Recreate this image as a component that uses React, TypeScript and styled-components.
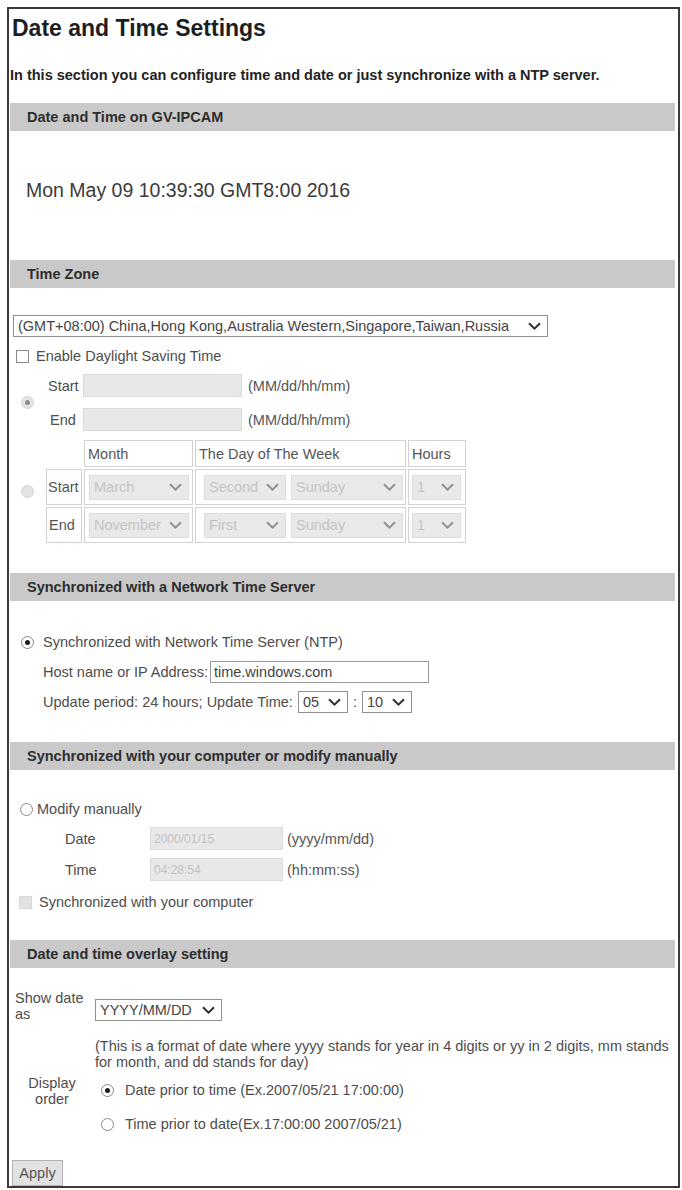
import React from "react";
import styled, { createGlobalStyle } from "styled-components";

const Global = createGlobalStyle`
  html, body { margin: 0; padding: 0; background: #fff; }
  body {
    font-family: "Liberation Sans", Arial, sans-serif;
    font-size: 14.5px;
    line-height: 18px;
    color: #4d4d4d;
  }
  #root { padding: 7px; }
`;

const Page = styled.div`
  box-sizing: border-box;
  width: 673px;
  min-height: 1181px;
  border: 2px solid #3a3a3a;
  display: flex;
  flex-direction: column;
`;

const Title = styled.h1`
  margin: 5px 0 0 3px;
  font-size: 23px;
  line-height: 28px;
  font-weight: bold;
  color: #1e1e1e;
`;

const Intro = styled.p`
  margin: 24px 0 19px 1px;
  font-size: 14.5px;
  line-height: 18px;
  font-weight: bold;
  color: #232323;
`;

const Section = styled.section`
  display: flex;
  flex-direction: column;
`;

const Bar = styled.h2`
  box-sizing: border-box;
  margin: 0 3px 0 1px;
  height: 28px;
  padding-left: 17px;
  display: flex;
  align-items: center;
  background: #c9c9c9;
  font-size: 14.5px;
  font-weight: bold;
  color: #2e2e2e;
`;

const Body = styled.div<{ $pt: number; $pb: number; $pl: number }>`
  display: flex;
  flex-direction: column;
  align-items: flex-start;
  padding: ${(p) => p.$pt}px 0 ${(p) => p.$pb}px ${(p) => p.$pl}px;
`;

const DateNow = styled.div`
  font-size: 19.5px;
  line-height: 24px;
  color: #3b3b3b;
`;

const Row = styled.div<{ $mt?: number; $ml?: number; $gap?: number; $h?: number }>`
  display: flex;
  align-items: center;
  margin-top: ${(p) => p.$mt ?? 0}px;
  margin-left: ${(p) => p.$ml ?? 0}px;
  gap: ${(p) => p.$gap ?? 0}px;
  min-height: ${(p) => p.$h ?? 18}px;
  white-space: nowrap;
`;

const Radio = styled.span<{ $checked?: boolean; $disabled?: boolean }>`
  box-sizing: border-box;
  flex: none;
  width: 13px;
  height: 13px;
  border-radius: 50%;
  border: 1px solid ${(p) => (p.$disabled ? "#d4d4d4" : "#8a8a8a")};
  background: ${(p) => (p.$disabled ? "#e3e3e3" : "#fff")};
  display: inline-flex;
  align-items: center;
  justify-content: center;
  &::after {
    content: "";
    display: ${(p) => (p.$checked ? "block" : "none")};
    width: 5px;
    height: 5px;
    border-radius: 50%;
    background: ${(p) => (p.$disabled ? "#8e8e8e" : "#1f1f1f")};
  }
`;

const Check = styled.span<{ $disabled?: boolean }>`
  box-sizing: border-box;
  flex: none;
  width: 13px;
  height: 13px;
  border: 1px solid ${(p) => (p.$disabled ? "#dadada" : "#8a8a8a")};
  background: ${(p) => (p.$disabled ? "#e2e2e2" : "#fff")};
`;

const SelectBox = styled.div<{ $w: number; $h?: number; $disabled?: boolean }>`
  box-sizing: border-box;
  flex: none;
  width: ${(p) => p.$w}px;
  height: ${(p) => p.$h ?? 22}px;
  display: flex;
  align-items: center;
  justify-content: space-between;
  gap: 4px;
  padding: 0 6px 0 4px;
  border: 1px solid ${(p) => (p.$disabled ? "#dcdcdc" : "#8f8f8f")};
  background: ${(p) => (p.$disabled ? "#e9e9e9" : "#fff")};
  color: ${(p) => (p.$disabled ? "#c4c4c4" : "#444")};
  font-size: 14.5px;
  white-space: nowrap;
  overflow: hidden;
`;

const SelectText = styled.span`
  overflow: hidden;
  text-overflow: clip;
`;

const TextField = styled.input<{ $w: number; $h?: number }>`
  box-sizing: border-box;
  flex: none;
  width: ${(p) => p.$w}px;
  height: ${(p) => p.$h ?? 22}px;
  margin: 0;
  padding: 0 3px;
  border: 1px solid #9a9a9a;
  background: #fff;
  font-family: "Liberation Sans", Arial, sans-serif;
  font-size: 14.5px;
  color: #444;
  outline: none;
  &:disabled {
    border-color: #dadada;
    background: #e8e8e8;
    color: #c2c2c2;
    font-size: 12px;
  }
`;

const Label = styled.span<{ $w?: number; $pl?: number }>`
  flex: none;
  box-sizing: border-box;
  width: ${(p) => (p.$w ? `${p.$w}px` : "auto")};
  padding-left: ${(p) => p.$pl ?? 0}px;
`;

const Hint = styled.span<{ $ml: number }>`
  margin-left: ${(p) => p.$ml}px;
  color: #555;
`;

const Mode = styled.div<{ $mt: number }>`
  display: flex;
  align-items: center;
  margin-top: ${(p) => p.$mt}px;
`;

const RadioSlot = styled.div`
  box-sizing: border-box;
  width: 33px;
  padding-left: 8px;
  display: flex;
`;

const Stack = styled.div<{ $gap: number }>`
  display: flex;
  flex-direction: column;
  gap: ${(p) => p.$gap}px;
`;

const DstTable = styled.div`
  display: grid;
  grid-template-columns: 36px 109px 211px 58px;
  grid-template-rows: 27px 36px 36px;
  gap: 2px;
`;

const Cell = styled.div<{ $blank?: boolean; $pl?: number }>`
  box-sizing: border-box;
  border: 1px solid ${(p) => (p.$blank ? "transparent" : "#d2d2d2")};
  display: flex;
  align-items: center;
  gap: 5px;
  padding-left: ${(p) => p.$pl ?? 3}px;
  color: #555;
  white-space: nowrap;
  overflow: hidden;
`;

const OverlayGrid = styled.div`
  display: grid;
  grid-template-columns: 80px 1fr;
  align-items: start;
`;

const SideLabel = styled.div<{ $center?: boolean; $mt?: number }>`
  margin-top: ${(p) => p.$mt ?? 0}px;
  line-height: 16px;
  text-align: ${(p) => (p.$center ? "center" : "left")};
  padding-right: ${(p) => (p.$center ? 6 : 0)}px;
`;

const Desc = styled.p`
  margin: 16px 0 0 0;
  line-height: 16px;
  padding-right: 4px;
`;

const RadioList = styled.div`
  margin-top: 11px;
  padding-left: 6px;
  display: flex;
  flex-direction: column;
  gap: 16px;
`;

const Slot = styled.div<{ $mt?: number }>`
  margin-top: ${(p) => p.$mt ?? 0}px;
`;

const ApplyButton = styled.button`
  box-sizing: border-box;
  margin: 27px 0 0 3px;
  align-self: flex-start;
  width: 51px;
  height: 26px;
  padding: 0;
  border: 1px solid #b3b3b3;
  background: #e2e2e2;
  font-family: "Liberation Sans", Arial, sans-serif;
  font-size: 14.5px;
  color: #555;
`;

const Chevron: React.FC<{ color: string }> = ({ color }) => (
  <svg width="13" height="8" viewBox="0 0 13 8" style={{ flex: "none" }}>
    <path d="M1 1.2 L6.5 6.6 L12 1.2" fill="none" stroke={color} strokeWidth="2" />
  </svg>
);

const Select: React.FC<{ value: string; w: number; h?: number; disabled?: boolean }> = ({
  value,
  w,
  h,
  disabled,
}) => (
  <SelectBox $w={w} $h={h} $disabled={disabled}>
    <SelectText>{value}</SelectText>
    <Chevron color={disabled ? "#8f8f8f" : "#2f2f2f"} />
  </SelectBox>
);

export default function App() {
  return (
    <>
      <Global />
      <Page>
        <Title>Date and Time Settings</Title>
        <Intro>In this section you can configure time and date or just synchronize with a NTP server.</Intro>

        <Section>
          <Bar>Date and Time on GV-IPCAM</Bar>
          <Body $pt={47} $pb={58} $pl={17}>
            <DateNow>Mon May 09 10:39:30 GMT8:00 2016</DateNow>
          </Body>
        </Section>

        <Section>
          <Bar>Time Zone</Bar>
          <Body $pt={27} $pb={30} $pl={4}>
            <Select w={535} value="(GMT+08:00) China,Hong Kong,Australia Western,Singapore,Taiwan,Russia" />
            <Row $mt={10} $ml={3} $gap={7}>
              <Check />
              <span>Enable Daylight Saving Time</span>
            </Row>
            <Mode $mt={9}>
              <RadioSlot>
                <Radio $checked $disabled />
              </RadioSlot>
              <Stack $gap={11}>
                <Row $h={23}>
                  <Label $w={37} $pl={2}>Start</Label>
                  <TextField $w={159} $h={23} disabled />
                  <Hint $ml={6}>(MM/dd/hh/mm)</Hint>
                </Row>
                <Row $h={23}>
                  <Label $w={37} $pl={4}>End</Label>
                  <TextField $w={159} $h={23} disabled />
                  <Hint $ml={6}>(MM/dd/hh/mm)</Hint>
                </Row>
              </Stack>
            </Mode>
            <Mode $mt={9}>
              <RadioSlot>
                <Radio $disabled />
              </RadioSlot>
              <DstTable>
                <Cell $blank />
                <Cell>Month</Cell>
                <Cell>The Day of The Week</Cell>
                <Cell>Hours</Cell>

                <Cell $pl={1}>Start</Cell>
                <Cell $pl={4}>
                  <Select w={100} h={25} disabled value="March" />
                </Cell>
                <Cell $pl={8}>
                  <Select w={82} h={25} disabled value="Second" />
                  <Select w={112} h={25} disabled value="Sunday" />
                </Cell>
                <Cell $pl={3}>
                  <Select w={49} h={25} disabled value="1" />
                </Cell>

                <Cell $pl={2}>End</Cell>
                <Cell $pl={4}>
                  <Select w={100} h={25} disabled value="November" />
                </Cell>
                <Cell $pl={8}>
                  <Select w={82} h={25} disabled value="First" />
                  <Select w={112} h={25} disabled value="Sunday" />
                </Cell>
                <Cell $pl={3}>
                  <Select w={49} h={25} disabled value="1" />
                </Cell>
              </DstTable>
            </Mode>
          </Body>
        </Section>

        <Section>
          <Bar>Synchronized with a Network Time Server</Bar>
          <Body $pt={32} $pb={29} $pl={12}>
            <Row $gap={9}>
              <Radio $checked />
              <span>Synchronized with Network Time Server (NTP)</span>
            </Row>
            <Row $mt={10} $ml={22} $gap={2} $h={22}>
              <span>Host name or IP Address:</span>
              <TextField $w={219} defaultValue="time.windows.com" />
            </Row>
            <Row $mt={8} $ml={22} $gap={5} $h={22}>
              <span>Update period: 24 hours; Update Time:</span>
              <Select w={50} value="05" />
              <span>:</span>
              <Select w={50} value="10" />
            </Row>
          </Body>
        </Section>

        <Section>
          <Bar>Synchronized with your computer or modify manually</Bar>
          <Body $pt={30} $pb={29} $pl={11}>
            <Row $gap={4}>
              <Radio />
              <span>Modify manually</span>
            </Row>
            <Row $mt={9} $ml={45} $h={23}>
              <Label $w={85}>Date</Label>
              <TextField $w={133} $h={23} disabled defaultValue="2000/01/15" />
              <Hint $ml={4}>(yyyy/mm/dd)</Hint>
            </Row>
            <Row $mt={8} $ml={45} $h={23}>
              <Label $w={85}>Time</Label>
              <TextField $w={133} $h={23} disabled defaultValue="04:28:54" />
              <Hint $ml={4}>(hh:mm:ss)</Hint>
            </Row>
            <Row $mt={12} $ml={-1} $gap={7}>
              <Check $disabled />
              <span>Synchronized with your computer</span>
            </Row>
          </Body>
        </Section>

        <Section>
          <Bar>Date and time overlay setting</Bar>
          <Body $pt={22} $pb={0} $pl={6}>
            <OverlayGrid>
              <SideLabel>Show date as</SideLabel>
              <Slot $mt={9}>
                <Select w={127} value="YYYY/MM/DD" />
              </Slot>
              <div />
              <Desc>
                (This is a format of date where yyyy stands for year in 4 digits or yy in 2 digits, mm stands for
                month, and dd stands for day)
              </Desc>
              <SideLabel $center $mt={5}>
                Display order
              </SideLabel>
              <RadioList>
                <Row $gap={11}>
                  <Radio $checked />
                  <span>Date prior to time (Ex.2007/05/21 17:00:00)</span>
                </Row>
                <Row $gap={11}>
                  <Radio />
                  <span>Time prior to date(Ex.17:00:00 2007/05/21)</span>
                </Row>
              </RadioList>
            </OverlayGrid>
          </Body>
          <ApplyButton type="button">Apply</ApplyButton>
        </Section>
      </Page>
    </>
  );
}
